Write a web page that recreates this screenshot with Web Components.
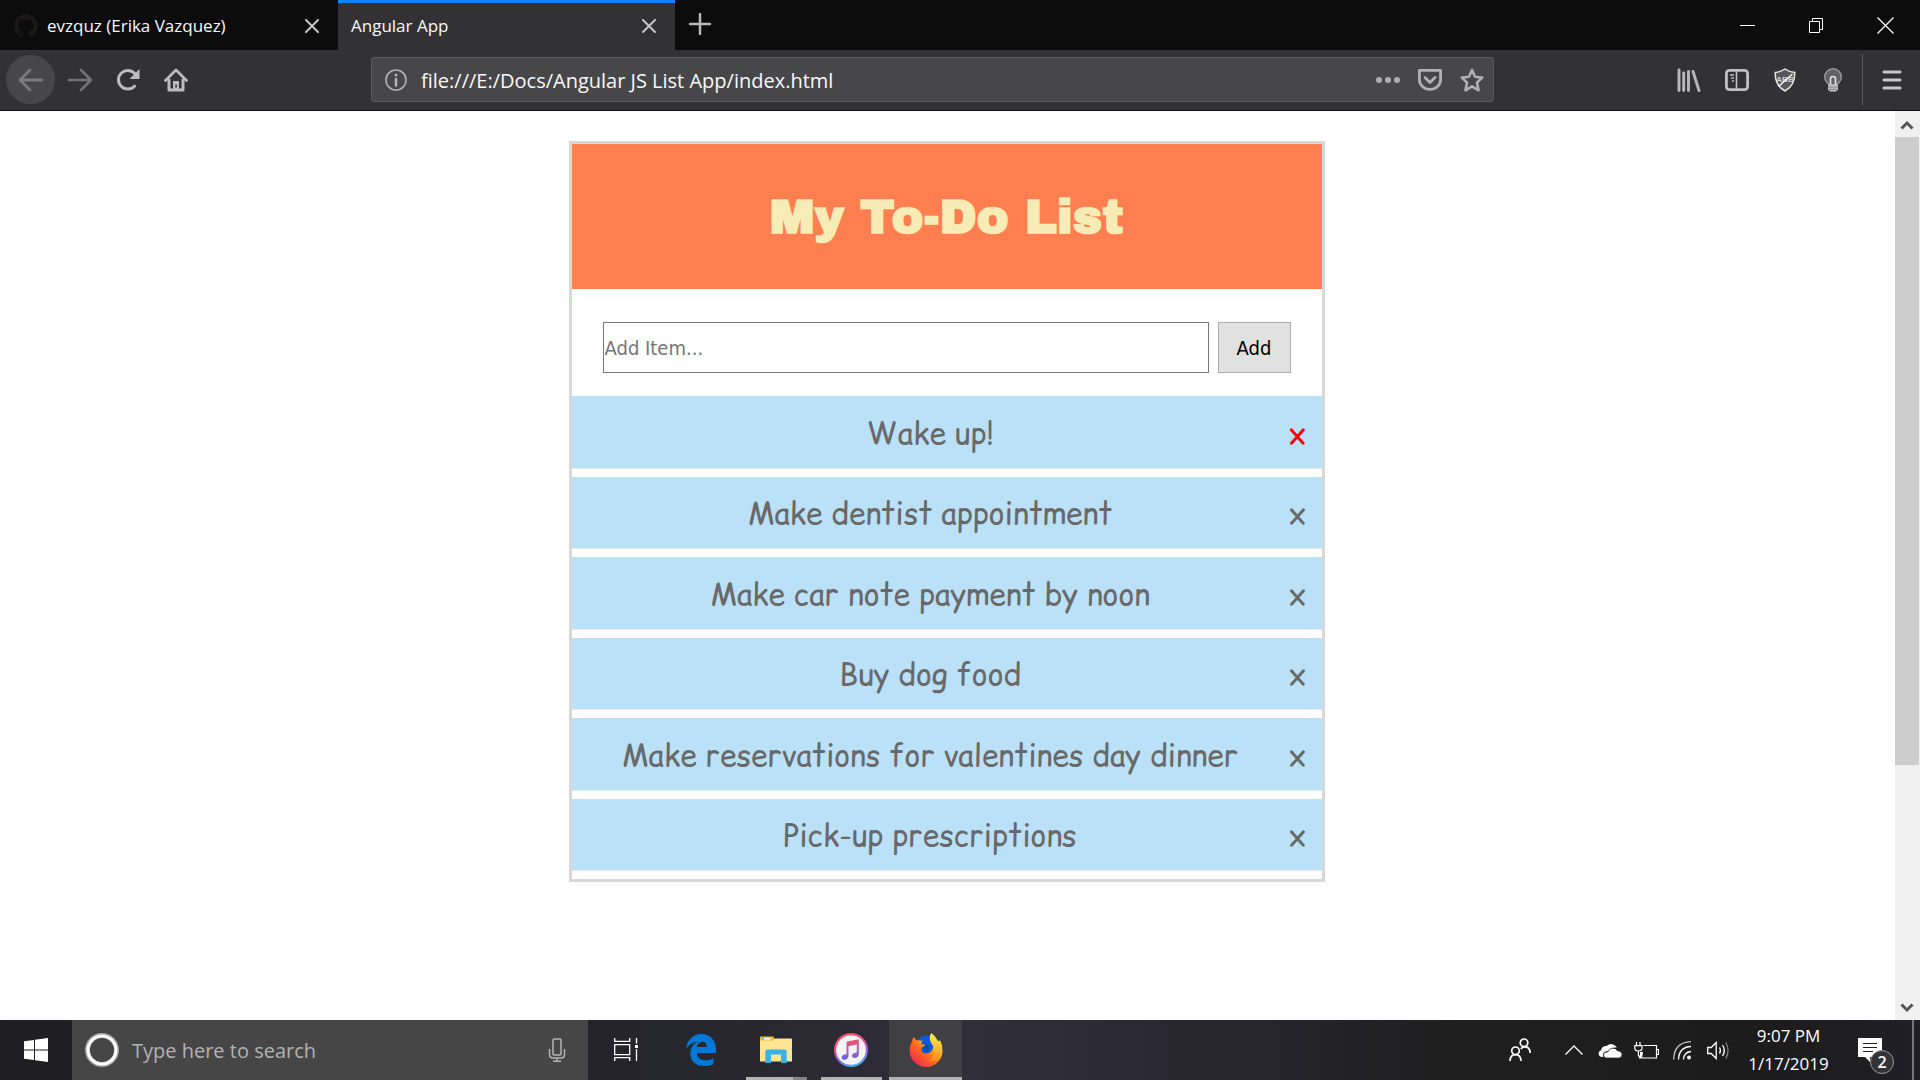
<!DOCTYPE html>
<html lang="en">
<head>
<meta charset="utf-8">
<title>Angular App</title>
<style>
html, body { margin: 0; height: 100%; }
body { font-family: "Segoe UI", "Open Sans", "Noto Sans", sans-serif; background: #fff; overflow: hidden; }
</style>
</head>
<body>
<desk-top>
  <browser-tabs slot="window"></browser-tabs>
  <browser-toolbar slot="window"></browser-toolbar>
  <page-view slot="window">
    <todo-card heading="My To-Do List">
      <todo-item hot>Wake up!</todo-item>
      <todo-item>Make dentist appointment</todo-item>
      <todo-item>Make car note payment by noon</todo-item>
      <todo-item>Buy dog food</todo-item>
      <todo-item>Make reservations for valentines day dinner</todo-item>
      <todo-item>Pick-up prescriptions</todo-item>
    </todo-card>
  </page-view>
  <task-bar slot="taskbar"></task-bar>
</desk-top>

<script>
const define = (name, html, setup) => {
  const template = document.createElement('template');
  template.innerHTML = html;
  customElements.define(name, class extends HTMLElement {
    constructor() {
      super();
      this.attachShadow({ mode: 'open' }).append(template.content.cloneNode(true));
    }
    connectedCallback() { if (setup) setup(this, this.shadowRoot); }
  });
};

const RESET = `
  *, *::before { box-sizing: border-box; }
  button, input { font: inherit; color: inherit; background: none; border: 0; margin: 0; padding: 0; outline: 0; border-radius: 0; }
  button { display: flex; align-items: center; justify-content: center; }
`;

/* name: [width, height, drawing] */
const ICONS = {
  github: [24, 24, `<path fill="#1b1818" d="M12 0a12 12 0 0 0-4 23.400c.6.1.8-.3.8-.6v-2.200c-3.300.7-4-1.400-4-1.400-.6-1.400-1.400-1.800-1.400-1.800-1-.7.1-.7.1-.7 1.200.1 1.900 1.300 1.900 1.300 1 1.800 2.800 1.300 3.500 1 .1-.8.400-1.300.7-1.600-2.600-.3-5.400-1.300-5.400-6 0-1.300.4-2.300 1.200-3.200-.1-.3-.5-1.500.1-3.200 0 0 1-.3 3.300 1.200a11 11 0 0 1 6 0c2.300-1.500 3.300-1.200 3.300-1.200.7 1.700.3 2.900.1 3.200.8.9 1.200 1.900 1.200 3.200 0 4.700-2.800 5.700-5.500 6 .5.400.9 1.100.9 2.200v3.200c0 .3.2.7.8.6A12 12 0 0 0 12 0z"/>`],
  close: [14, 14, `<path d="M1 1l12 12M13 1L1 13" stroke="#c4c4c5" stroke-width="2" stroke-linecap="round"/>`],
  plus: [22, 22, `<path d="M11 1v20M1 11h20" stroke="#b8b8b8" stroke-width="2.500" stroke-linecap="round"/>`],
  minimize: [15, 15, `<path d="M0 7.500h15" stroke="#fff"/>`],
  restore: [15, 15, `<path d="M.5 3.500h10v11H.5zM3.500 3.500v-3h10v11h-3" stroke="#fff" fill="none"/>`],
  exit: [17, 17, `<path d="M.5.500l16 16M16.500.500l-16 16" stroke="#fff" stroke-width="1.200"/>`],
  back: [26, 24, `<path d="M24 12H2M12 2L2 12l10 10" fill="none" stroke="#7c7c7e" stroke-width="2.800" stroke-linecap="round" stroke-linejoin="round"/>`],
  forward: [24, 24, `<path d="M1 12h21M13 2l10 10-10 10" fill="none" stroke="#727274" stroke-width="2.600" stroke-linecap="round" stroke-linejoin="round"/>`],
  reload: [24, 24, `<path d="M18.500 18.200A9.300 9.300 0 1 1 18.700 5.500" fill="none" stroke="#bcbcbd" stroke-width="3" stroke-linecap="round"/><path d="M23.500 1v10h-10z" fill="#bcbcbd"/>`],
  home: [24, 24, `<path d="M1.500 12.500L12 2l10.500 10.500" fill="none" stroke="#bcbcbd" stroke-width="2.800" stroke-linecap="round" stroke-linejoin="round"/><path d="M5 11v11h14V11" fill="none" stroke="#bcbcbd" stroke-width="3" stroke-linejoin="round"/><path d="M9 13h6v10H9z" fill="#bcbcbd"/><path d="M11.300 16.500h1.500v3h-1.500z" fill="#323234"/>`],
  info: [22, 22, `<circle cx="11" cy="11" r="10" fill="none" stroke="#b1b1b3" stroke-width="1.600"/><circle cx="11" cy="6" r="1.600" fill="#b1b1b3"/><path d="M11 10v6.500" stroke="#b1b1b3" stroke-width="2.600" stroke-linecap="round"/>`],
  dots: [24, 8, `<g fill="#b1b1b3"><circle cx="3" cy="4" r="3"/><circle cx="12" cy="4" r="3"/><circle cx="21" cy="4" r="3"/></g>`],
  pocket: [24, 22, `<path d="M1.400 1.400h21.200v9a10.600 10 0 0 1-21.200 0z" fill="none" stroke="#b1b1b3" stroke-width="2.800" stroke-linejoin="round"/><path d="M7 8.500l5 5 5-5" fill="none" stroke="#b1b1b3" stroke-width="2.800" stroke-linecap="round" stroke-linejoin="round"/>`],
  star: [24, 24, `<path d="M12 2l3 6.800 7.200.8-5.200 5 1.500 7.700-6.500-3.900-6.500 3.900L7 14.600l-5.200-5L9 8.800z" fill="none" stroke="#b1b1b3" stroke-width="2.600" stroke-linejoin="round"/>`],
  library: [24, 24, `<path d="M2 2v20.500M6.700 5v17.500M11.500 3.500v19M16 3.500l6 19" stroke="#b8b8b9" stroke-width="2.900" stroke-linecap="round"/>`],
  sidebar: [24, 24, `<rect x="1.400" y="2.400" width="21.200" height="19.200" rx="3" fill="none" stroke="#c0c0c1" stroke-width="2.800"/><path d="M11.500 3v18M5 7h4M6 10h3M7 13h2" stroke="#c0c0c1" stroke-width="1.600"/>`],
  shield: [22, 24, `<path d="M11 1C8 3.200 4.500 4 1.200 4.500 1 13 3.500 19 11 23c7.500-4 10-10 9.800-18.500C17.500 4 14 3.200 11 1z" fill="#58585a" stroke="#e6e6e6" stroke-width="1.500"/><text x="11" y="14" font-family="Liberation Sans" font-size="8" font-weight="700" text-anchor="middle" fill="#d0d0d0">ABB</text><path d="M4.500 18.500L18.500 6" stroke="#fff" stroke-width="1.300"/>`],
  bulb: [20, 24, `<circle cx="10" cy="9" r="8.300" fill="#626264" stroke="#9c9c9e" stroke-width="1.400"/><path d="M7.500 17V11a2.500 2.500 0 0 1 5 0v6" fill="none" stroke="#e4e4e4" stroke-width="1.600"/><path d="M5 16.500h10v5l-2 2H7l-2-2z" fill="#c4c4c4"/><path d="M5 19h10M6 21.400h8" stroke="#77777a" stroke-width=".9"/>`],
  menu: [20, 20, `<path d="M2 2h16M2 10h16M2 18h16" stroke="#c6c6c7" stroke-width="3" stroke-linecap="round"/>`],
  up: [14, 10, `<path d="M1.500 8.500L7 3l5.500 5.500" fill="none" stroke="#555" stroke-width="3"/>`],
  down: [14, 10, `<path d="M1.500 1.500L7 7l5.500-5.500" fill="none" stroke="#555" stroke-width="3"/>`],
  windows: [24, 24, `<path fill="#fff" d="M0 3.300L10 2v9.500H0zM11 1.800L24 0v11.500H11zM0 12.500h10V22L0 20.700zM11 12.500h13V24l-13-1.800z"/>`],
  cortana: [34, 34, `<circle cx="17" cy="17" r="14.500" fill="none" stroke="#a5a5a5" stroke-width="5"/><circle cx="17" cy="17" r="14" fill="none" stroke="#fff" stroke-width="3"/>`],
  mic: [18, 24, `<g fill="none" stroke="#b4b4b4" stroke-width="1.500"><rect x="5" y="1" width="8" height="16" rx="1"/><path d="M1.500 11v5.500q0 3.500 3.500 3.500h8q3.500 0 3.500-3.500V11M9 20v3M5 23.200h8"/></g>`],
  taskview: [24, 24, `<g fill="none" stroke="#fff" stroke-width="1.300"><path d="M.7 0v3.300h15V0M.7 6.700h15v10h-15zM.7 23v-3.300h15V23M22.500 0v5.500M22.500 11v12"/></g><path d="M21 7h3v3h-3z" fill="#fff"/>`],
  edge: [30, 32, `<path fill="#0078d7" d="M0 15C1.200 6 7 0 15.300 0 24.500 0 30 6.500 30 15.500V19H10.800c.3 5 4.300 7.400 9 7.400 2.800 0 5.400-.7 7.700-2.100v6C24.700 31.500 21.700 32 18.500 32 10 32 4.300 27.300 4.300 19.500c0-5.500 3-10 7.700-12.300C7.500 7.600 3 10.500 0 15zM11 13h9.800c0-3.500-1.500-5.300-4.600-5.300-2.900 0-4.800 2.100-5.200 5.300z"/>`],
  folder: [32, 28, `<path fill="#f5bf2f" d="M0 1.500Q0 .5 1 .5h12l2 2.500v4H0z"/><path fill="#fff" d="M3 2h7v1.500H3z"/><path fill="#47b0dd" d="M2 2h2v1.500H2z"/><path fill="#ffe593" d="M0 4.500h13.500l2-2H31q1 0 1 1V25.500H0z"/><path fill="#3ab4e8" d="M5.300 15.500q0-2 2-2h17.400q2 0 2 2V27H21v-8.500H11V27H5.300z"/>`],
  itunes: [34, 34, `<defs><linearGradient id="r" x1=".3" y1="0" x2=".7" y2="1"><stop offset="0" stop-color="#fb4b55"/><stop offset=".35" stop-color="#e9528f"/><stop offset=".65" stop-color="#9a62e8"/><stop offset="1" stop-color="#35bdf2"/></linearGradient><linearGradient id="n" x1="0" y1="0" x2="0" y2="1"><stop offset="0" stop-color="#f4505f"/><stop offset=".5" stop-color="#c05ac0"/><stop offset="1" stop-color="#5467ee"/></linearGradient></defs><circle cx="17" cy="17" r="17" fill="url(#r)"/><circle cx="17" cy="17" r="14.800" fill="#f4f3f6"/><path fill="url(#n)" d="M12.500 8.800l12.300-2.500v15c0 2-1.500 3.300-3.600 3.600-1.900.2-3.200-.8-3.200-2.200 0-1.600 1.300-2.500 3-2.800 1.500-.3 1.800-.5 1.800-1.700v-6.700l-8.300 1.700v9.600c0 2.200-1.500 3.600-3.600 3.900-1.900.2-3.200-.8-3.200-2.300s1.300-2.500 3-2.800c1.500-.3 1.800-.5 1.800-1.700z"/>`],
  firefox: [34, 34, `<defs><linearGradient id="f" x1="1" y1="0" x2=".1" y2=".9"><stop offset="0" stop-color="#fff44f"/><stop offset=".35" stop-color="#ffb320"/><stop offset=".6" stop-color="#ff6a1c"/><stop offset="1" stop-color="#f0215a"/></linearGradient><linearGradient id="y" x1="0" y1="0" x2="0" y2="1"><stop offset="0" stop-color="#fff44f"/><stop offset="1" stop-color="#ff8a16"/></linearGradient></defs><circle cx="18" cy="15" r="12.500" fill="#0a5bd8"/><path fill="url(#f)" d="M2.500 9.500L4.500 4l3 3.500q3-.8 6 .3-1 1.500-1.200 3 2 .7 4.200.7-.5 2-4 3-1 3 1.500 5 4 2 7.500-.5 3-2.300 2.500-6 2 .8 2.500 2.500l3-8 2 .5q2.500 5.500 2 10.500A16.700 16 0 0 1 17 34 16.700 16.500 0 0 1 .5 18Q.3 13 2.500 9.500z"/><path fill="#0a4bb8" d="M12.300 11q2 1 5-.5l3 3q1 3-1.500 5-3.500 1.500-6-.5 4 .5 4.500-1.800-2 0-4-1.500 3-1.500 3.200-2.900-2.500.3-4.200-.8z"/><path fill="url(#y)" d="M22.300 0q-2.500 4-1 8 1 3 3.200 5.500 2.500 4.500.5 9-2 4-6.500 6 8.500.5 12.300-6.500Q34 14.500 30.500 8q-.5 1.500-.7 2.500Q28.300 5 22.300 0z"/>`],
  people: [22, 24, `<g fill="none" stroke="#fff" stroke-width="1.700"><circle cx="15" cy="4.800" r="3.800"/><circle cx="6.500" cy="12.800" r="3.800"/><path d="M1 23q.3-6.300 5.500-6.300T12 23M12 11q1.200-2.300 4-2.300 4.700.3 5.200 6.300"/></g>`],
  chevron: [18, 10, `<path d="M.5 9.500L9 1l8.500 8.500" fill="none" stroke="#fff" stroke-width="1.400"/>`],
  cloud: [24, 15, `<path fill="#fff" d="M5 14H3.500A3.500 3.500 0 0 1 3 7.200 5.500 5.500 0 0 1 8.500 3 6.300 6.300 0 0 1 18.800 4.800Q14 3.800 11.500 8 6.500 7.500 5 11z"/><path fill="#fff" d="M8.500 15a3 3 0 0 1 0-6h1.300a5.300 5.300 0 0 1 9.800-1 3.700 3.700 0 0 1 4.400 3.500Q24 15 20.500 15z" stroke="#1e1e1f" stroke-width=".7"/>`],
  battery: [25, 17, `<g fill="none" stroke="#fff" stroke-width="1.200"><path d="M9.500 3.500H22.500v12.500H5.500v-2M22.500 7.500h2v5h-2M2.500 0v3M6 0v3M.8 3.600h7.200v2.400q0 3-3.600 3T.8 6zM4.400 9v5h2"/></g><path d="M6 10h3l-1 6H6z" fill="#fff"/>`],
  wifi: [18, 19, `<g fill="none" stroke="#fff" stroke-width="1.300"><path d="M.7 18.500Q1 1.500 18 .7" opacity=".75"/><path d="M5.500 18.500Q6 6 18 5.500M10.500 18.500q.5-7.500 7.500-8"/></g><circle cx="16" cy="16.500" r="2" fill="#fff"/>`],
  volume: [22, 19, `<g fill="none" stroke="#fff" stroke-width="1.300"><path d="M.7 6.500h3.500l5-5v16l-5-5H.7z"/><path d="M12.500 6.500q2 3 0 6M15.500 4q3.600 5.500 0 11"/><path d="M18.800 1.500q4.500 8 0 16" opacity=".45"/></g>`],
  notes: [24, 24, `<path fill="#fff" d="M0 0h24v19H12v5l-5-5H0z"/><path d="M5 5.500h14M5 9.500h14M5 13.500h10" stroke="#1e1e20" stroke-width="1.200"/>`]
};

define('app-icon', `<style>:host { display: inline-flex; flex: none; } svg { display: block; }</style>`, (host, root) => {
  const [w, h, art] = ICONS[host.getAttribute('name')];
  root.querySelector('svg')?.remove();
  root.append(document.createRange().createContextualFragment(
    `<svg xmlns="http://www.w3.org/2000/svg" aria-hidden="true" width="${w}" height="${h}" viewBox="0 0 ${w} ${h}">${art}</svg>`));
});

define('desk-top', `<style>
  :host { display: flex; flex-direction: column; height: 100vh; }
  main { flex: 1; min-height: 0; display: flex; flex-direction: column; }
</style><main><slot name="window"></slot></main><slot name="taskbar"></slot>`);

define('browser-tabs', `<style>${RESET}
  :host { display: flex; height: 50px; background: #0c0c0d; color: #f9f9fa; font-size: 17px; line-height: 24px; }
  nav { display: flex; flex: 1; padding-left: 1px; }
  .tab { display: flex; align-items: center; width: 337px; padding: 0 19px 2px 13px; gap: 9px; border-top: 3px solid transparent; }
  .tab.active { background: #323234; border-color: #0a84ff; }
  .title { flex: 1; justify-content: flex-start; white-space: nowrap; }
  .new { width: 49px; padding-bottom: 2px; }
  .win { width: 69px; }
</style>
<nav aria-label="Tabs">
  <div class="tab"><app-icon name="github"></app-icon><button class="title">evzquz (Erika Vazquez)</button><button aria-label="Close tab"><app-icon name="close"></app-icon></button></div>
  <div class="tab active"><button class="title">Angular App</button><button aria-label="Close tab"><app-icon name="close"></app-icon></button></div>
  <button class="new" aria-label="New tab"><app-icon name="plus"></app-icon></button>
</nav>
<button class="win" aria-label="Minimize"><app-icon name="minimize"></app-icon></button>
<button class="win" aria-label="Restore"><app-icon name="restore"></app-icon></button>
<button class="win" aria-label="Close"><app-icon name="exit"></app-icon></button>`);

define('browser-toolbar', `<style>${RESET}
  :host { display: flex; align-items: center; height: 61px; padding: 0 4px 1px 6px; background: #323234; border-bottom: 1px solid #0c0c0d; box-sizing: border-box; }
  .nav { display: flex; align-items: center; width: 365px; }
  .nav button { width: 48px; height: 49px; }
  .nav .back { width: 49px; border-radius: 50%; background: #474749; margin-right: 1px; }
  form { display: flex; align-items: center; flex: 1; max-width: 1123px; height: 45px; padding: 0 9px 0 13px; gap: 14px; background: #474749; border: 1px solid #5a5a5c; border-radius: 3px; }
  input { flex: 1; min-width: 0; padding-top: 2px; color: #f9f9fa; font-size: 20px; line-height: 28px; }
  .acts { display: flex; gap: 18px; }
  .tools { display: flex; align-items: center; margin-left: auto; }
  .tools button { width: 48px; height: 45px; }
  .menu { border-left: 1px solid #5c5c5e; height: 51px; display: flex; align-items: center; margin-left: 5px; padding-left: 5px; }
</style>
<div class="nav">
  <button class="back" aria-label="Back"><app-icon name="back"></app-icon></button>
  <button aria-label="Forward"><app-icon name="forward"></app-icon></button>
  <button aria-label="Reload"><app-icon name="reload"></app-icon></button>
  <button aria-label="Home"><app-icon name="home"></app-icon></button>
</div>
<form>
  <app-icon name="info"></app-icon>
  <input type="text" aria-label="Address" value="file:///E:/Docs/Angular JS List App/index.html">
  <div class="acts">
    <button type="button" aria-label="Page actions"><app-icon name="dots"></app-icon></button>
    <button type="button" aria-label="Save to Pocket"><app-icon name="pocket"></app-icon></button>
    <button type="button" aria-label="Bookmark"><app-icon name="star"></app-icon></button>
  </div>
</form>
<div class="tools">
  <button aria-label="Library"><app-icon name="library"></app-icon></button>
  <button aria-label="Sidebars"><app-icon name="sidebar"></app-icon></button>
  <button aria-label="Ad blocker"><app-icon name="shield"></app-icon></button>
  <button aria-label="Lights"><app-icon name="bulb"></app-icon></button>
  <div class="menu"><button aria-label="Menu"><app-icon name="menu"></app-icon></button></div>
</div>`);

define('page-view', `<style>${RESET}
  :host { display: flex; flex: 1; min-height: 0; background: #fff; }
  .page { flex: 1; padding: 30px 2px 0 0; overflow: hidden; }
  .bar { display: flex; flex-direction: column; width: 25px; background: #f0f0f0; padding-right: 1px; }
  .bar button { height: 26px; width: 24px; padding-top: 2px; }
  .track { flex: 1; display: flex; flex-direction: column; }
  .thumb { flex: 11; background: #cdcdcd; }
  .rest { flex: 4; }
</style>
<div class="page"><slot></slot></div>
<div class="bar">
  <button aria-label="Scroll up"><app-icon name="up"></app-icon></button>
  <div class="track"><div class="thumb"></div><div class="rest"></div></div>
  <button aria-label="Scroll down"><app-icon name="down"></app-icon></button>
</div>`);

define('todo-card', `<style>${RESET}
  :host { display: block; box-sizing: border-box; max-width: 756px; margin: 0 auto; border: 3px solid #d8d8d8; }
  header { display: flex; align-items: center; justify-content: center; min-height: 145px; background: #ff7f50; }
  h1 { margin: 0; font: 900 48px/60px "Arial Black", "Archivo Black", "Inter", sans-serif; color: #f7ecb5; }
  form { display: flex; gap: 9px; padding: 33px 31px 23px; font: 20px/24px Tahoma, "DejaVu Sans Condensed", sans-serif; color: #000; }
  input { flex: 1; min-width: 0; height: 51px; padding: 0 1px; border: 1px solid #7a7a7a; background: #fff; }
  input::placeholder { color: #757575; opacity: 1; }
  button { width: 73px; border: 1px solid #adadad; background: #e1e1e1; }
  .list { display: grid; grid-auto-rows: 1fr; gap: 8px; min-height: 483px; padding-bottom: 8px; }
</style>
<header><h1></h1></header>
<form><input type="text" placeholder="Add Item..." aria-label="Add Item"><button type="button">Add</button></form>
<div class="list" role="list"><slot></slot></div>`, (host, root) => {
  root.querySelector('h1').textContent = host.getAttribute('heading');
});

define('todo-item', `<style>${RESET}
  :host { display: flex; align-items: center; box-sizing: border-box; padding-top: 2px; background: #bae1f8; border-bottom: 1px solid #eaeaea; color: #696969; font: 30px/42px "Comic Sans MS", "Comic Relief", "Comic Neue", cursive; }
  span { flex: 1; text-align: center; }
  button { padding-right: 15px; }
  :host([hot]) button { color: #f00; }
</style><span><slot></slot></span><button aria-label="Remove item">x</button>`);

define('task-bar', `<style>${RESET}
  :host { display: flex; height: 60px; color: #fff; background: linear-gradient(90deg, #1f1f21 0, #24242a 32%, #302e3a 50%, #2a2933 60%, #1f1f20 75%, #1c1c1d 92%, #201f26 100%); }
  .start { width: 72px; }
  form { display: flex; align-items: center; width: 516px; padding: 0 22px 0 13px; gap: 13px; background: #464646; }
  input { flex: 1; min-width: 0; padding-top: 2px; font-size: 20px; line-height: 28px; }
  input::placeholder { color: #b2b2b2; opacity: 1; }
  .apps { display: flex; gap: 2px; padding-left: 1px; }
  .apps button { position: relative; width: 73px; }
  .apps .run::before { content: ""; position: absolute; left: 7px; right: 5px; bottom: 0; height: 3px; background: #b5b3b3; }
  .apps .multi::before { background: linear-gradient(90deg, #b5b3b3 77%, #858484 77%); }
  .apps .on { background: #404044; }
  .apps .on::before { left: 0; right: 0; }
  .tray { display: flex; margin-left: auto; }
  .tray button { width: 36px; }
  .tray .people { width: 72px; }
  .tray .clock { width: 105px; flex-direction: column; font-size: 17px; line-height: 28px; }
  .tray .action { position: relative; width: 58px; }
  .badge { position: absolute; left: 29px; top: 30px; width: 24px; height: 24px; border: 1px solid #9a9a9a; border-radius: 50%; background: #333336; font-size: 16px; line-height: 22px; font-weight: 600; text-align: center; }
  .tray .peek { width: 8px; margin-left: 13px; border-left: 2px solid #77777a; }
</style>
<button class="start" aria-label="Start"><app-icon name="windows"></app-icon></button>
<form><app-icon name="cortana"></app-icon><input type="text" placeholder="Type here to search" aria-label="Search"><app-icon name="mic"></app-icon></form>
<div class="apps">
  <button aria-label="Task view"><app-icon name="taskview"></app-icon></button>
  <button aria-label="Edge"><app-icon name="edge"></app-icon></button>
  <button class="run multi" aria-label="File Explorer"><app-icon name="folder"></app-icon></button>
  <button class="run" aria-label="iTunes"><app-icon name="itunes"></app-icon></button>
  <button class="run on" aria-label="Firefox"><app-icon name="firefox"></app-icon></button>
</div>
<div class="tray">
  <button class="people" aria-label="People"><app-icon name="people"></app-icon></button>
  <button aria-label="Hidden icons"><app-icon name="chevron"></app-icon></button>
  <button aria-label="OneDrive"><app-icon name="cloud"></app-icon></button>
  <button aria-label="Battery"><app-icon name="battery"></app-icon></button>
  <button aria-label="Network"><app-icon name="wifi"></app-icon></button>
  <button aria-label="Volume"><app-icon name="volume"></app-icon></button>
  <button class="clock"><span>9:07 PM</span><span>1/17/2019</span></button>
  <button class="action" aria-label="Notifications"><app-icon name="notes"></app-icon><span class="badge">2</span></button>
  <button class="peek" aria-label="Show desktop"></button>
</div>`);
</script>
</body>
</html>
